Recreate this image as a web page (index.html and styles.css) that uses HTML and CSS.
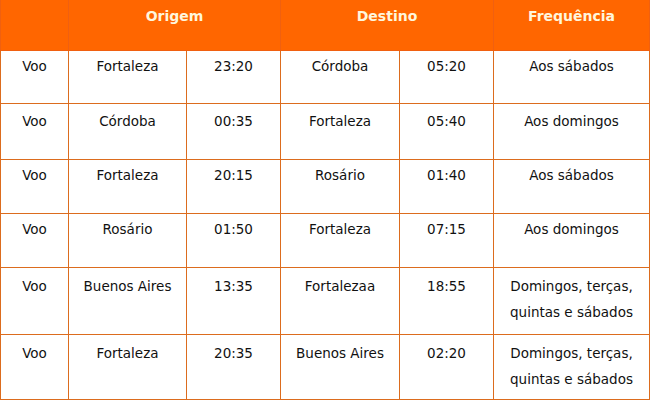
FILE: index.html
```html
<!DOCTYPE html>
<html>
<head>
<meta charset="utf-8">
<link rel="stylesheet" href="styles.css">
</head>
<body>
<table class="voos">
  <colgroup>
    <col class="c1"><col class="c2"><col class="c3"><col class="c4"><col class="c5"><col class="c6">
  </colgroup>
  <thead>
    <tr>
      <th></th>
      <th colspan="2">Origem</th>
      <th colspan="2">Destino</th>
      <th>Frequência</th>
    </tr>
  </thead>
  <tbody>
    <tr class="r1"><td>Voo</td><td>Fortaleza</td><td>23:20</td><td>Córdoba</td><td>05:20</td><td>Aos sábados</td></tr>
    <tr class="r2"><td>Voo</td><td>Córdoba</td><td>00:35</td><td>Fortaleza</td><td>05:40</td><td>Aos domingos</td></tr>
    <tr class="r3"><td>Voo</td><td>Fortaleza</td><td>20:15</td><td>Rosário</td><td>01:40</td><td>Aos sábados</td></tr>
    <tr class="r4"><td>Voo</td><td>Rosário</td><td>01:50</td><td>Fortaleza</td><td>07:15</td><td>Aos domingos</td></tr>
    <tr class="tall"><td>Voo</td><td>Buenos Aires</td><td>13:35</td><td>Fortalezaa</td><td>18:55</td><td>Domingos, terças,<br>quintas e sábados</td></tr>
    <tr class="tall last"><td>Voo</td><td>Fortaleza</td><td>20:35</td><td>Buenos Aires</td><td>02:20</td><td>Domingos, terças,<br>quintas e sábados</td></tr>
  </tbody>
</table>
</body>
</html>
```
FILE: styles.css
```css
html, body {
  margin: 0;
  padding: 0;
  background: #ffffff;
}
.voos {
  border-collapse: collapse;
  table-layout: fixed;
  width: 649px;
  font-family: "DejaVu Sans", Verdana, sans-serif;
  font-size: 13.5px;
  color: #111111;
}
.c1 { width: 68px; }
.c2 { width: 118px; }
.c3 { width: 94px; }
.c4 { width: 119px; }
.c5 { width: 94px; }
.c6 { width: 156px; }
.voos th {
  background: #ff6600;
  color: #fff6dc;
  font-size: 14px;
  font-weight: bold;
  height: 47px;
  padding: 3px 0 0 0;
  vertical-align: top;
  line-height: 26px;
  border: 1px solid #f06010;
  border-top: none;
  text-align: center;
}
.voos td {
  border: 1px solid #dc6c1e;
  text-align: center;
  vertical-align: top;
  line-height: 26px;
  padding: 2px 0 0 0;
  height: 51px;
}
.voos .r1 td { height: 50px; padding-top: 2px; }
.voos .r2 td { height: 51px; padding-top: 4px; }
.voos .tall td { height: 61px; padding-top: 5px; }
.voos .tall.last td { height: 59px; padding-top: 5px; }
```
